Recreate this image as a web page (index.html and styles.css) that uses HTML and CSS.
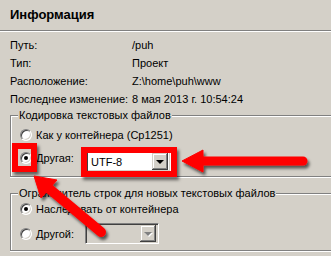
FILE: index.html
```html
<!DOCTYPE html>
<html lang="ru">

<head>
    <meta charset="UTF-8">
    <meta name="viewport" content="width=device-width, initial-scale=1.0">
    <title>Информация</title>
    <link rel="stylesheet" href="styles.css">
</head>

<body>

    <div class="panel">
        <div class="title">Информация</div>

        <div class="props">
            <span>Путь:</span><span>/puh</span>
            <span>Тип:</span><span>Проект</span>
            <span>Расположение:</span><span>Z:\home\puh\www</span>
            <span>Последнее изменение:</span><span>8 мая 2013 г. 10:54:24</span>
        </div>

        <fieldset class="group group--enc">
            <legend>Кодировка текстовых файлов</legend>
            <div class="opt opt--first">
                <span class="radio"></span>
                <span>Как у контейнера (Cp1251)</span>
            </div>
            <div class="opt opt--combo">
                <span class="opt-left">
                    <span class="radio radio--on"></span>
                    <span class="opt-label">Другая:</span>
                </span>
                <span class="combo">
                    <span class="combo-text">UTF-8</span>
                    <span class="combo-btn"><span class="tri"></span></span>
                </span>
            </div>
        </fieldset>

        <fieldset class="group group--eol">
            <legend>Ограничитель строк для новых текстовых файлов</legend>
            <div class="opt opt--first2">
                <span class="radio radio--on"></span>
                <span>Наследовать от контейнера</span>
            </div>
            <div class="opt opt--combo2">
                <span class="opt-left">
                    <span class="radio"></span>
                    <span class="opt-label">Другой:</span>
                </span>
                <span class="combo combo--off">
                    <span class="combo-text"></span>
                    <span class="combo-btn"><span class="tri"></span></span>
                </span>
            </div>
        </fieldset>
    </div>

    <!-- annotations -->
    <div class="mark mark--radio"></div>
    <div class="mark mark--combo"></div>

    <svg class="arrows" width="331" height="256" viewBox="0 0 331 256">
        <defs>
            <filter id="shadow" x="-20%" y="-20%" width="140%" height="140%">
                <feDropShadow dx="2" dy="3" stdDeviation="1.5" flood-color="#000" flood-opacity="0.6" />
            </filter>
        </defs>
        <g filter="url(#shadow)" fill="#ff0000" stroke="#ff0000">
            <line x1="198" y1="161" x2="303" y2="161" stroke-width="9" stroke-linecap="round" />
            <polygon points="182,161 203,150 203,172" stroke-width="1" stroke-linejoin="round" />

            <line x1="101" y1="232" x2="46" y2="186" stroke-width="10" stroke-linecap="round" />
            <polygon points="34,176 41,198 57,180" stroke-width="1" stroke-linejoin="round" />
        </g>
    </svg>

</body>

</html>
```

FILE: styles.css
```css
html {
    background-color: #d4d0c8;
}

body {
    margin: 0;
    overflow: hidden;
    width: 331px;
    height: 256px;
    position: relative;
    font-family: "Liberation Sans", Arial, sans-serif;
    font-size: 11px;
    color: #000;
}

.panel {
    display: flex;
    flex-direction: column;
}

.title {
    height: 30px;
    line-height: 29px;
    padding-left: 10px;
    font-size: 13px;
    font-weight: bold;
    border-bottom: 1px solid #808080;
    box-shadow: 0 1px 0 #fff;
}

.props {
    display: grid;
    grid-template-columns: 122px auto;
    grid-auto-rows: 18px;
    align-items: center;
    padding: 5px 0 0 10px;
}

/* etched group box, open on the right: it runs on past the panel */
.group {
    margin: 0 0 0 10px;
    padding: 0 0 4px 7px;
    border: 1px solid #808080;
    border-right: none;
    box-shadow: 0 1px 0 #fff, inset 1px 1px 0 #fff;
    min-width: 0;
}

.group legend {
    padding: 0 1px;
    line-height: 15px;
    background-color: #d4d0c8;
}

.group--eol {
    margin-top: 9px;
    padding-bottom: 6px;
}

.opt {
    display: flex;
    align-items: center;
    padding-left: 2px;
}

.opt--first {
    height: 24px;
}

.opt--first2 {
    height: 16px;
}

.opt--combo {
    height: 25px;
}

.opt--combo .opt-left {
    margin-bottom: 3px;
}

.opt--combo .combo {
    margin-top: 4px;
}

.opt--combo2 {
    height: 27px;
}

.opt--combo2 .combo {
    margin-top: 6px;
}

.opt--combo2 .opt-left {
    margin-top: 6px;
}

.opt-left {
    display: flex;
    align-items: center;
}

.opt-label {
    width: 50px;
}

.opt--combo2 .opt-label {
    width: 49px;
}

/* classic radio */
.radio {
    position: relative;
    width: 12px;
    height: 12px;
    box-sizing: border-box;
    margin-right: 4px;
    border-radius: 50%;
    background-color: #fff;
    border: 1px solid;
    border-color: #808080 #fff #fff #808080;
    box-shadow: inset 1px 1px 0 #404040, inset -1px -1px 0 #d4d0c8;
    flex-shrink: 0;
}

.radio--on::after {
    content: "";
    position: absolute;
    left: 3px;
    top: 3px;
    width: 4px;
    height: 4px;
    border-radius: 50%;
    background-color: #000;
}

/* classic combobox */
.combo {
    display: flex;
    align-items: center;
    box-sizing: border-box;
    width: 85px;
    height: 21px;
    padding: 2px;
    background-color: #fff;
    border: 1px solid;
    border-color: #808080 #fff #fff #808080;
    box-shadow: inset 1px 1px 0 #404040, inset -1px -1px 0 #d4d0c8;
}

.combo--off {
    width: 74px;
    background-color: #d4d0c8;
}

.combo-text {
    flex-grow: 1;
    padding-left: 2px;
}

.combo-btn {
    display: flex;
    align-items: center;
    justify-content: center;
    width: 16px;
    height: 17px;
    background-color: #d4d0c8;
    box-shadow: inset -1px -1px 0 #404040, inset 1px 1px 0 #d4d0c8,
        inset -2px -2px 0 #808080, inset 2px 2px 0 #fff;
}

.tri {
    width: 0;
    height: 0;
    border-left: 4px solid transparent;
    border-right: 4px solid transparent;
    border-top: 4px solid #000;
}

.combo--off .tri {
    border-top-color: #808080;
    filter: drop-shadow(1px 1px 0 #fff);
}

/* red annotation frames */
.mark {
    position: absolute;
    box-sizing: border-box;
    border: 6px solid #ff0000;
    box-shadow: 2px 3px 3px rgba(0, 0, 0, 0.55);
}

.mark--radio {
    left: 12px;
    top: 143px;
    width: 25px;
    height: 29px;
}

.mark--combo {
    left: 81px;
    top: 147px;
    width: 96px;
    height: 30px;
}

.arrows {
    position: absolute;
    left: 0;
    top: 0;
    pointer-events: none;
}
```
